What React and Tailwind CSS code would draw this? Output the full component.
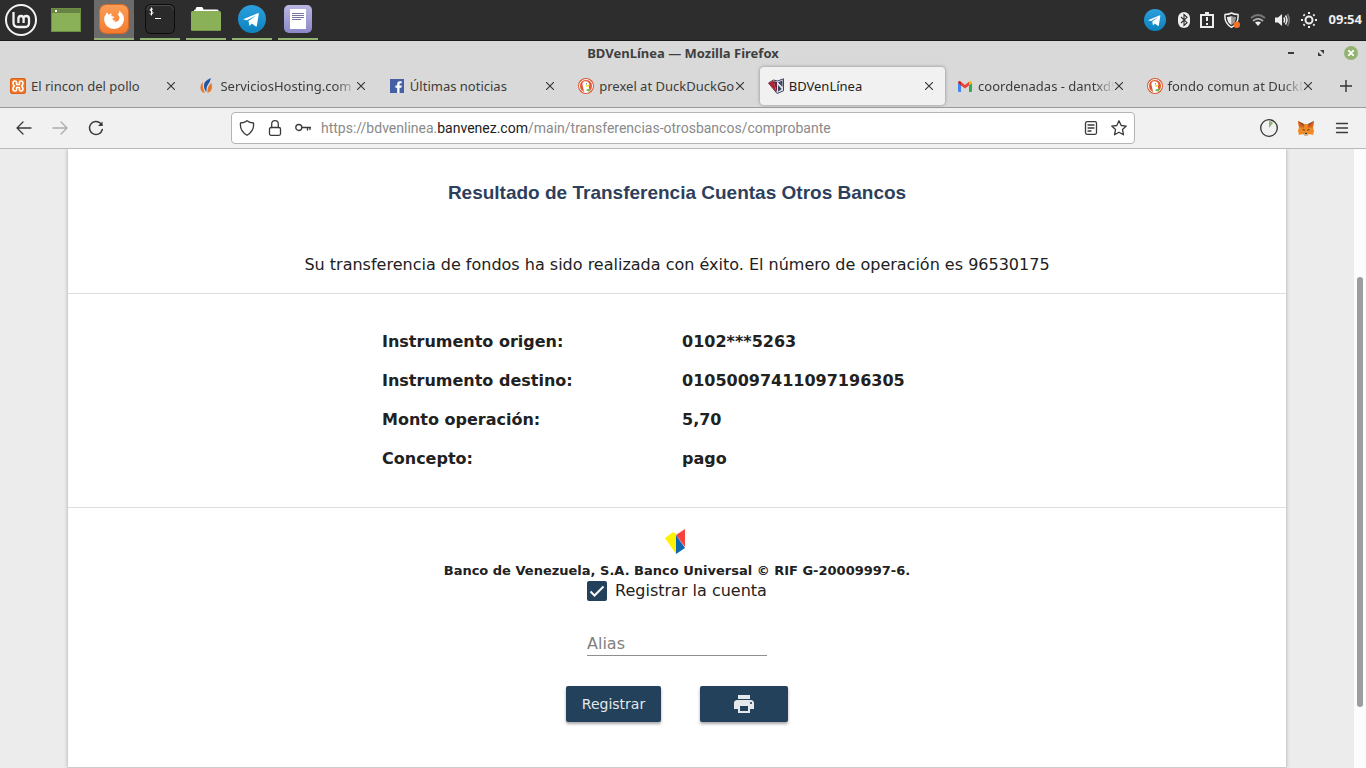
import React from "react";
import { MdPrint } from "react-icons/md";

function Telegram({ size }) {
  return (
    <svg width={size} height={size} viewBox="0 0 28 28" aria-hidden="true">
      <defs>
        <linearGradient id="tg" x1="0" y1="0" x2="0" y2="1">
          <stop offset="0" stopColor="#2ba0dc" />
          <stop offset="1" stopColor="#0d82be" />
        </linearGradient>
      </defs>
      <circle cx="14" cy="14" r="14" fill="url(#tg)" />
      <path d="M5 14.200 20.200 8Q21 8 20.800 9L18.800 21Q18.500 22 17.500 21.300L13.800 18.500l-2.300 2.500-1-5 7.500-5.500-9 4.800z" fill="#fff" />
    </svg>
  );
}

function WindowIcon() {
  return (
    <svg width="30" height="24" viewBox="0 0 30 24" aria-hidden="true">
      <rect width="30" height="24" fill="#8bb158" />
      <rect width="30" height="5" fill="#688442" />
      <rect x="4" y="2" width="2" height="2" fill="#fff" />
      <rect x=".5" y=".5" width="29" height="23" fill="none" stroke="#6f8f46" />
    </svg>
  );
}

function FirefoxTile() {
  return (
    <span className="flex size-7 items-center justify-center rounded-md bg-linear-to-b from-[#fb9d55] to-[#f47b2f] ring-1 ring-[#d66a26]">
      <svg width="22" height="22" viewBox="0 0 22 22" aria-hidden="true">
        <path
          d="M4 4.500 5.800 6.800Q7 5.500 8.800 5.500 8 7 8.500 8.200L11.500 8.800Q11 10.200 9 10.800 9.500 13.500 12.500 13.800 16 13.500 16.500 10 16.500 7.500 14.500 6.200 17 5 16 2.500 21 6 21 11.500 20 20.500 11 21 2 20.500 1 11.500 1 8 2.800 6.800 2.800 5.500 4 4.500Z"
          fill="#fff"
        />
        <path d="M9 10.800Q10.500 13 13 11.500 11.500 13.500 9 12.500z" fill="#fff" />
      </svg>
    </span>
  );
}

function Terminal() {
  return (
    <svg width="30" height="30" viewBox="0 0 30 30" aria-hidden="true">
      <rect x=".5" y=".5" width="29" height="29" rx="5" fill="#2a2a2a" stroke="#0c0c0c" />
      <path d="M2 6a4 4 0 0 1 4-4.500h18a4 4 0 0 1 4 4.500" fill="none" stroke="#4a4a4a" />
      <path d="M8 5.500C7 4.500 5 4.500 5 6s3 1.200 3 2.700S5.800 10.500 4.700 9.500M6.500 3.500v8" fill="none" stroke="#fff" />
      <path d="M10 14.500h6" stroke="#fff" />
    </svg>
  );
}

function Folder() {
  return (
    <svg width="30" height="24" viewBox="0 0 30 24" aria-hidden="true">
      <path d="M3 5V3.500Q3 2.500 4.500 2.500L5 1Q5.300 0 6 0h4.500q1 0 1.500 1l.5 1.500H26q1.500 0 1.500 1V5z" fill="#fff" />
      <rect y="4" width="30" height="20" rx="1.500" fill="#8bb158" />
      <path d="M1 23.500h28" stroke="#75984a" />
    </svg>
  );
}

function Notes() {
  return (
    <svg width="28" height="28" viewBox="0 0 28 28" aria-hidden="true">
      <defs>
        <linearGradient id="nt" x1="0" y1="0" x2="0" y2="1">
          <stop offset="0" stopColor="#b9b7e2" />
          <stop offset="1" stopColor="#8b88c8" />
        </linearGradient>
      </defs>
      <rect width="28" height="28" rx="5" fill="url(#nt)" />
      <path d="M6 4h16v20H6z" fill="#fff" />
      <path d="M8 8.500h12M8 10.500h12M8 12.500h12M8 14.500h9" stroke="#7774a4" />
    </svg>
  );
}

const apps = [
  { name: "Firefox", icon: <FirefoxTile />, active: true },
  { name: "Terminal", icon: <Terminal /> },
  { name: "Archivos", icon: <Folder /> },
  { name: "Telegram", icon: <Telegram size={28} /> },
  { name: "Notas", icon: <Notes /> },
];

function Panel() {
  return (
    <header className="flex h-[41px] items-stretch border-b border-[#1a1a1a] bg-[#2d2d2d]">
      <button aria-label="Menú" className="flex w-[42px] items-center justify-center">
        <svg width="32" height="32" viewBox="0 0 32 32" fill="none" stroke="#f4f4f4" aria-hidden="true">
          <circle cx="16" cy="16" r="15" strokeWidth="2" />
          <path d="M8.500 8v10.500q0 4.500 4.500 4.500h7q4 0 4-4V15q0-3-2.700-3T18.600 15v4M18.600 15q0-3-2.600-3T13.400 15v4" strokeWidth="2.300" />
        </svg>
      </button>
      <button aria-label="Escritorio" className="flex w-12 items-center justify-center">
        <WindowIcon />
      </button>
      <nav className="ml-1 flex gap-1.5">
        {apps.map((a) => (
          <button
            key={a.name}
            aria-label={a.name}
            className={
              "flex w-10 items-center justify-center border-b-2 border-[#92b372] " + (a.active ? "bg-[#6b6b6b]" : "")
            }
          >
            {a.icon}
          </button>
        ))}
      </nav>
      <div className="ml-auto flex items-center pr-1 text-[#eee]">
        <Telegram size={22} />
        <svg className="ml-3" width="12" height="18" viewBox="0 0 12 18" aria-hidden="true">
          <rect y="1" width="12" height="16" rx="6" fill="#eee" />
          <path d="m3 6 6 5.700L6 14.500v-11L9 6.300 3 12" fill="none" stroke="#2d2d2d" strokeWidth="1.100" />
        </svg>
        <svg className="ml-2.5" width="14" height="16" viewBox="0 0 14 16" fill="none" stroke="#eee" strokeWidth="2" aria-hidden="true">
          <path d="M1 3h12v12H1zM7 5v4M7 11v2M5 1h4" />
        </svg>
        <svg className="ml-2.5" width="16" height="16" viewBox="0 0 16 16" aria-hidden="true">
          <path d="M7.500 1Q10 2.500 14 2.500 15 11 7.500 15.300 0 11 1 2.500 5 2.500 7.500 1Z" fill="none" stroke="#eee" strokeWidth="1.500" />
          <path d="M7.500 4q2 1 4.500 1 .2 5-4.500 8z" fill="#999" />
          <path d="M7.500 4q-2 1-4.500 1-.2 5 4.500 8z" fill="#eee" />
          <circle cx="12.800" cy="12.800" r="3.200" fill="#f37329" />
        </svg>
        <svg className="ml-2.5" width="16" height="14" viewBox="0 0 16 14" fill="none" strokeWidth="2" aria-hidden="true">
          <path d="M1 5q7-6 14 0" stroke="#777" />
          <path d="M3 8q5-4.500 10 0" stroke="#aaa" />
          <path d="M5 9.500q3-2 6 0L8 13z" fill="#eee" />
        </svg>
        <svg className="ml-2" width="17" height="16" viewBox="0 0 17 16" fill="none" strokeWidth="1.500" aria-hidden="true">
          <path d="M1 5.500h3L8 2v12l-4-3.500H1z" fill="#eee" />
          <path d="M9.800 5.500q1.800 2.500 0 5" stroke="#eee" />
          <path d="M11.500 3.500q3 4.500 0 9" stroke="#eee" />
          <path d="M13.500 2q3.500 6 0 12" stroke="#777" />
        </svg>
        <svg className="ml-2.5" width="16" height="16" viewBox="0 0 16 16" fill="none" stroke="#eee" strokeWidth="2" aria-hidden="true">
          <circle cx="8" cy="8" r="3.500" />
          <path d="M8 0v2M8 14v2M0 8h2M14 8h2M2.500 2.500l1.200 1.200M12.300 12.300l1.200 1.200M2.500 13.500l1.200-1.200M12.300 3.700l1.200-1.200" />
        </svg>
        <time className="ml-3 font-['Noto_Sans',sans-serif] text-[13px] font-bold">09:54</time>
      </div>
    </header>
  );
}

function Duck() {
  return (
    <svg width="16" height="16" viewBox="0 0 16 16" aria-hidden="true">
      <circle cx="8" cy="8" r="8" fill="#de5833" />
      <circle cx="8" cy="8" r="6.500" fill="#de5833" stroke="#fff" />
      <path d="M6 13.500 4.500 7Q4 3.300 7.300 3.200 11.300 3.300 11.300 6.800L10.800 9l1.200 4Q9 15 6 13.500z" fill="#fff" />
      <path d="M8 7.500q2.500-1 4 0-1.500 1.500-4 1z" fill="#fdd20a" />
      <path d="m8.500 11.500 3.500-1v3l-3.500-.8z" fill="#65bc46" />
      <circle cx="8.500" cy="5.800" r=".6" fill="#2d4f8e" />
    </svg>
  );
}

function Xampp() {
  return (
    <svg width="16" height="16" viewBox="0 0 16 16" aria-hidden="true">
      <rect x=".5" y=".5" width="15" height="15" rx="1.500" fill="#f37623" stroke="#d8621b" />
      <path
        d="M6.500 5.500Q7 3 5 3 3 3 3 5.200 3 7 4.500 8 3 9 3 10.800 3 13 5 13 7 13 6.500 10.500L6.700 9.500h2.600l.2 1Q9 13 11 13 13 13 13 10.800 13 9 11.500 8 13 7 13 5.200 13 3 11 3 9 3 9.500 5.500L9.300 6.500H6.700Z"
        fill="none"
        stroke="#fff"
        strokeWidth="1.600"
        strokeLinejoin="round"
      />
    </svg>
  );
}

function Hosting() {
  return (
    <svg width="16" height="16" viewBox="0 0 16 16" aria-hidden="true">
      <path d="M4 4Q0 8 2 12.500q1 2 4 2.500-3-5-2-11z" fill="#e8792b" />
      <path d="M12 0Q4 3 5 9q.4 3 2.500 5Q7 9 9 6.500 11 4 12 0z" fill="#1f55a5" />
      <path d="M12.500 5Q8 8 8.500 15q4.500-1.500 4.500-6 0-2-.5-4z" fill="#e8792b" />
    </svg>
  );
}

function Facebook() {
  return (
    <svg width="14" height="14" viewBox="0 0 14 14" aria-hidden="true">
      <rect width="14" height="14" fill="#4660a5" />
      <path d="M7.200 14V8.700H5.400V6.500h1.800V5q0-2.800 2.800-2.800h1.700v2.100h-1.200q-1 0-1 1v1.200h2.200l-.3 2.200H9.500V14z" fill="#fff" />
    </svg>
  );
}

function BankIcon() {
  return (
    <svg width="16" height="16" viewBox="0 0 16 16" aria-hidden="true">
      <path d="M.5 5 5.500 2 9.500 3 15.500.8v12L9 15.500z" fill="#e9e4e8" stroke="#3a4560" />
      <path d="M.5 5.300 5.500 2.500 8.500 14.500z" fill="#b5222f" />
      <path d="M5.500 3 9 4v11z" fill="#6a2337" />
      <path d="m10 4.500 4.500-2.300V9zM10 7l3.800 4L10 13.800z" fill="#39486a" />
    </svg>
  );
}

function Gmail() {
  return (
    <svg width="14" height="11" viewBox="0 0 14 11" aria-hidden="true">
      <path d="M0 2v8q0 1 1 1h2V4z" fill="#4285f4" />
      <path d="M14 2v8q0 1-1 1h-2V4z" fill="#34a853" />
      <path d="M3 .8 7 4l4-3.200v3.600L7 7.500 3 4.400z" fill="#ea4335" />
      <path d="M0 2Q0 0 1.500 0 2.300 0 3 .8v3.600L0 2z" fill="#c5221f" />
      <path d="M14 2q0-2-1.500-2-.8 0-1.500.8v3.600L14 2z" fill="#fbbc04" />
    </svg>
  );
}

const tabs = [
  { title: "El rincon del pollo", icon: <Xampp /> },
  { title: "ServiciosHosting.com -", icon: <Hosting />, fade: true },
  { title: "Últimas noticias", icon: <Facebook /> },
  { title: "prexel at DuckDuckGo", icon: <Duck /> },
  { title: "BDVenLínea", icon: <BankIcon />, active: true },
  { title: "coordenadas - dantxd5", icon: <Gmail />, fade: true },
  { title: "fondo comun at DuckD", icon: <Duck />, fade: true },
];

function Cross() {
  return (
    <svg width="8" height="8" viewBox="0 0 8 8" stroke="#333" strokeWidth="1.100" aria-hidden="true">
      <path d="m0 0 8 8M8 0 0 8" />
    </svg>
  );
}

function TitleBar() {
  return (
    <div className="grid h-6 grid-cols-[1fr_auto_1fr] items-center">
      <h1 className="col-start-2 pt-0.5 text-[13px] font-bold text-[#3f3f3f]">BDVenLínea — Mozilla Firefox</h1>
      <div className="flex items-center justify-end gap-4 pr-2">
        <button aria-label="Minimizar" className="flex size-3.5 items-center justify-center">
          <span className="h-0.5 w-1.5 bg-[#3a3a3a]" />
        </button>
        <button aria-label="Restaurar" className="flex size-3.5 items-center justify-center">
          <svg width="6" height="6" viewBox="0 0 6 6" fill="#3a3a3a" aria-hidden="true">
            <path d="M2 0h4v4zM0 2v4h4z" />
          </svg>
        </button>
        <button aria-label="Cerrar" className="flex size-3.5 items-center justify-center rounded-full bg-[#92b372]">
          <svg width="6" height="6" viewBox="0 0 6 6" stroke="#fff" strokeWidth="1.800" aria-hidden="true">
            <path d="m0 0 6 6M6 0 0 6" />
          </svg>
        </button>
      </div>
    </div>
  );
}

function Tabs() {
  return (
    <div className="flex h-[42px] items-stretch">
      {tabs.map((t, i) => (
        <div
          key={i}
          className={
            "mx-0.5 my-0.5 flex min-w-0 flex-1 items-center rounded pr-3 pl-2 " +
            (t.active ? "bg-[#f1f1f1] text-[#222] shadow-[0_0_3px_1px_#a9a9ad]" : "text-[#3c3c3c]")
          }
        >
          <span className="flex size-4 shrink-0 items-center justify-center">{t.icon}</span>
          <button
            className={
              "min-w-0 flex-1 pt-0.5 pl-[5px] text-left text-[13px] whitespace-nowrap " +
              (t.fade ? "mask-r-from-85% mask-r-to-100%" : "")
            }
          >
            {t.title}
          </button>
          <button aria-label={"Cerrar " + t.title} className="flex w-2 shrink-0 items-center justify-center">
            <Cross />
          </button>
        </div>
      ))}
      <button aria-label="Nueva pestaña" className="flex w-10 items-center justify-center">
        <svg width="12" height="12" viewBox="0 0 12 12" stroke="#333" strokeWidth="1.400" aria-hidden="true">
          <path d="M6 0v12M0 6h12" />
        </svg>
      </button>
    </div>
  );
}

function Stroke({ children, size = 16, className = "text-[#3a3a3a]" }) {
  return (
    <svg
      className={className}
      width={size}
      height={size}
      viewBox="0 0 16 16"
      fill="none"
      stroke="currentColor"
      strokeWidth="1.300"
      strokeLinecap="round"
      strokeLinejoin="round"
      aria-hidden="true"
    >
      {children}
    </svg>
  );
}

function MetaMask() {
  return (
    <svg width="16" height="16" viewBox="0 0 16 16" aria-hidden="true">
      <path d="m0 1 6 3h4l6-3-1 6 1 4-1 4-4-1-2 2H7l-2-2-4 1-1-4 1-4z" fill="#f08a24" />
      <path d="m0 1 6.500 4.500L6 8 1 7zM16 1 9.500 5.500 10 8l5-1z" fill="#d9641e" />
      <path d="m0 1 6 3-1 2zM16 1l-6 3 1 2z" fill="#8a4a2a" />
      <path d="m6 14 1-1h2l1 1-1 2H7z" fill="#c9b5a5" />
      <path d="m4 9 2.500.5V11zM12 9l-2.500.5V11zM7 13h2v1H7z" fill="#2b2b2b" />
    </svg>
  );
}

function NavBar() {
  return (
    <div className="flex h-[42px] items-center border-y border-t-[#9a9a9a] border-b-[#b9b9b9] bg-[#f1f1f1]">
      <div className="flex flex-1 items-center gap-5 pl-4">
        <button aria-label="Atrás">
          <Stroke><path d="M1 8h14M7 2 1 8l6 6" /></Stroke>
        </button>
        <button aria-label="Adelante">
          <Stroke className="text-[#aaa]"><path d="M1 8h14M9 2l6 6-6 6" /></Stroke>
        </button>
        <button aria-label="Recargar">
          <Stroke>
            <path d="M14.300 9.500A6.500 6.500 0 1 1 12.500 3.300L14 5" strokeWidth="1.500" />
            <path d="M14.500 1.500V6H10z" fill="currentColor" stroke="none" />
          </Stroke>
        </button>
      </div>
      <div className="flex h-8 w-[904px] min-w-0 items-center rounded border border-[#b4b4b4] bg-white px-[7px]">
        <Stroke><path d="M8 .7Q10.500 3 14.500 3 15.500 11 8 15.300.5 11 1.500 3 5.500 3 8 .7Z" /></Stroke>
        <span className="ml-3 flex"><Stroke><rect x="2.500" y="7.500" width="11" height="7.800" rx="1.500" /><path d="M4.700 7.500V4q0-3.300 3.300-3.300T11.300 4v3.500" /></Stroke></span>
        <span className="ml-3 flex"><Stroke><circle cx="3.800" cy="7.500" r="3" /><path d="M7 7.500h8.500M12.500 7.500v2.500M15 7.500v2" /></Stroke></span>
        <a
          href="#comprobante"
          className="ml-2.5 min-w-0 flex-1 truncate pt-px font-['Roboto','Noto_Sans',sans-serif] text-[14px] text-[#8a8a8a]"
        >
          https://bdvenlinea.<span className="text-[#222]">banvenez.com</span>/main/transferencias-otrosbancos/comprobante
        </a>
        <button aria-label="Vista de lectura" className="mr-3">
          <Stroke><rect x="2.500" y="1.700" width="11" height="12.600" rx="1.500" /><path d="M5 5h6M5 8h6M5 11h3" /></Stroke>
        </button>
        <button aria-label="Marcador">
          <Stroke><path d="m8 .8 2.200 4.700 5.100.6-3.800 3.500 1 5.200L8 12.200l-4.500 2.600 1-5.200L.7 6.100l5.100-.6z" /></Stroke>
        </button>
      </div>
      <div className="flex flex-1 items-center justify-end gap-5 pr-4">
        <button aria-label="Extensión">
          <svg width="18" height="18" viewBox="0 0 18 18" aria-hidden="true">
            <circle cx="9" cy="9" r="8.300" fill="none" stroke="#333" strokeWidth="1.300" />
            <path d="M9 9V2q2.500 0 4 2z" fill="#8fb573" />
          </svg>
        </button>
        <button aria-label="MetaMask"><MetaMask /></button>
        <button aria-label="Menú de Firefox">
          <Stroke><path d="M2.500 3.500h11M2.500 8h11M2.500 12.500h11" /></Stroke>
        </button>
      </div>
    </div>
  );
}

const rows = [
  ["Instrumento origen:", "0102***5263"],
  ["Instrumento destino:", "01050097411097196305"],
  ["Monto operación:", "5,70"],
  ["Concepto:", "pago"],
];

function Receipt() {
  return (
    <main className="mx-auto flex w-[90%] flex-col items-center border-b border-[#ccc] bg-white pb-[45px] text-[16px] leading-5 text-[#212121] shadow-[0_0_4px_rgba(0,0,0,0.3)]">
      <h2 className="mt-8 font-['Liberation_Sans',sans-serif] text-[19px] leading-6 font-bold text-[#2e3f5c]">
        Resultado de Transferencia Cuentas Otros Bancos
      </h2>
      <p className="mt-[50px]">
        Su transferencia de fondos ha sido realizada con éxito. El número de operación es 96530175
      </p>
      <div className="mt-[18px] flex w-full justify-center border-y border-[#dedede] pt-7 pb-[29px]">
        <table className="w-[590px] text-left font-bold">
          <tbody>
            {rows.map(([k, v]) => (
              <tr key={k} className="h-[39px]">
                <th scope="row" className="w-[300px]">{k}</th>
                <td>{v}</td>
              </tr>
            ))}
          </tbody>
        </table>
      </div>
      <svg className="mt-5 mr-1" width="22" height="27" viewBox="0 0 22 27" aria-hidden="true">
        <path d="M1 10 9 4l3 2v20z" fill="#fff200" />
        <path d="m12 7 9-6v18z" fill="#f9423a" />
        <path d="m12 7 9 13-9 6z" fill="#0d66b0" />
      </svg>
      <p className="mt-1.5 text-[13px] font-bold">Banco de Venezuela, S.A. Banco Universal © RIF G-20009997-6.</p>
      <form className="flex flex-col items-center">
        <label className="flex items-center gap-2">
          <span className="grid size-5">
            <input
              type="checkbox"
              defaultChecked
              className="peer col-start-1 row-start-1 size-5 appearance-none rounded-xs border-2 border-[#23415b] checked:bg-[#23415b]"
            />
            <svg
              className="pointer-events-none col-start-1 row-start-1 hidden peer-checked:block"
              viewBox="0 0 20 20"
              fill="none"
              stroke="#fafafa"
              strokeWidth="2"
              aria-hidden="true"
            >
              <path d="m3.500 10.500 4 4 9-9" />
            </svg>
          </span>
          Registrar la cuenta
        </label>
        <input
          aria-label="Alias"
          placeholder="Alias"
          className="mt-[30px] h-[25px] w-[180px] border-b border-[#8f8f8f] outline-none placeholder:text-[#808080]"
        />
        <div className="mt-[30px] flex gap-[39px]">
          <button
            type="button"
            className="h-9 rounded-xs bg-[#23415b] px-4 text-[14px] text-[#e4e8eb] shadow-[0_2px_3px_rgba(0,0,0,0.35)]"
          >
            Registrar
          </button>
          <button
            type="button"
            aria-label="Imprimir"
            className="flex h-9 w-[88px] items-center justify-center rounded-xs bg-[#23415b] text-[#e4e8eb] shadow-[0_2px_3px_rgba(0,0,0,0.35)]"
          >
            <MdPrint className="size-6" />
          </button>
        </div>
      </form>
    </main>
  );
}

export default function App() {
  return (
    <div className="flex h-screen flex-col overflow-hidden bg-[#ececec] font-['DejaVu_Sans',sans-serif]">
      <Panel />
      <div className="bg-[#d9d9d9] font-['Noto_Sans',sans-serif]">
        <TitleBar />
        <Tabs />
        <NavBar />
      </div>
      <div className="flex min-h-0 flex-1">
        <div className="min-w-0 flex-1 overflow-hidden">
          <Receipt />
        </div>
        <div className="flex w-3 flex-col items-center bg-[#fcfcfc]">
          <div className="mt-32 h-[430px] w-1.5 rounded-full bg-[#9d9d9d]" />
        </div>
      </div>
    </div>
  );
}
